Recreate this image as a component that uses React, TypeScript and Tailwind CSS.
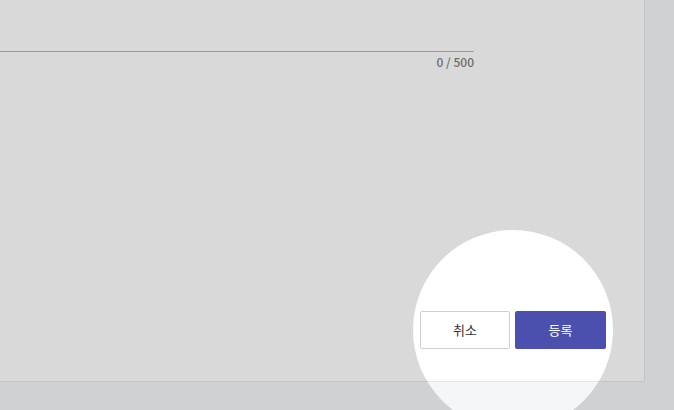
export default function App() {
  return (
    <div className="relative w-[674px] h-[410px] overflow-hidden bg-[#f5f6f8] font-['Noto_Sans_CJK_KR','Noto_Sans',sans-serif]">
      {/* Modal panel */}
      <div className="flex flex-col w-[645px] h-[382px] bg-white border-r border-b border-[#e6e7e9]">
        <div className="pt-[51px] w-[474px]">
          <div className="border-b border-[#b5b5b5]" />
          <p className="mt-[1px] text-right text-[12px] leading-[18px] font-medium text-[#7e7e7e]">0 / 500</p>
        </div>
        <div className="flex-1" />
        <div className="flex justify-end gap-[5px] pr-[38px] pb-[32px]">
          <button className="w-[90px] h-[38px] rounded-[2px] border border-[#cfcfcf] bg-white text-[13px] text-[#333]">
            취소
          </button>
          <button className="w-[91px] h-[38px] rounded-[2px] bg-[#4b4fad] text-[13px] text-white">
            등록
          </button>
        </div>
      </div>

      {/* Spotlight overlay */}
      <div className="absolute left-[413px] top-[230px] w-[200px] h-[200px] rounded-full shadow-[0_0_0_9999px_rgba(0,0,0,0.15)] pointer-events-none" />
    </div>
  )
}
